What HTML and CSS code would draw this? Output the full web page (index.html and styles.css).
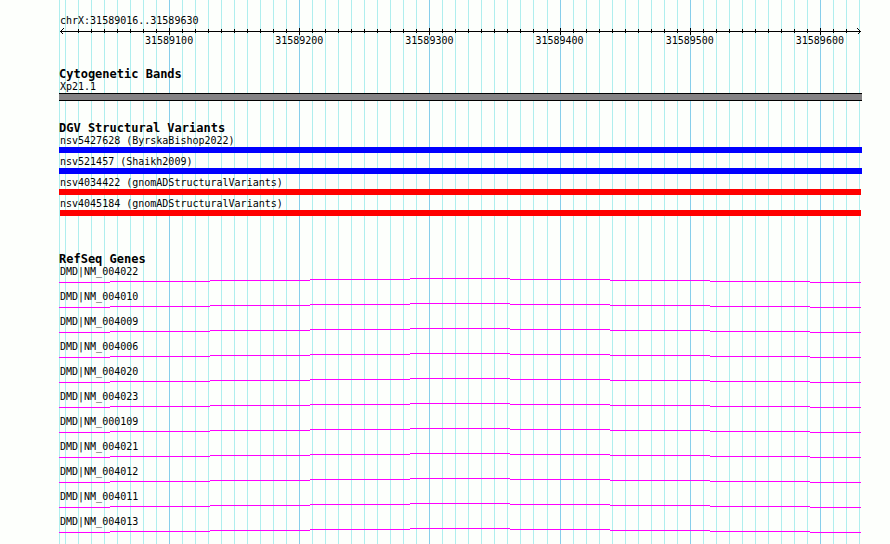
FILE: index.html
```html
<!DOCTYPE html>
<html lang="en">
<head>
<meta charset="utf-8">
<title>chrX:31589016..31589630</title>
<link rel="stylesheet" href="styles.css">
</head>
<body>
<svg width="0" height="0" class="defs" aria-hidden="true">
  <symbol id="intron" viewBox="0 0 803 5" preserveAspectRatio="none">
    <path d="M0 4.5H51M51 3.5H151M151 2.5H251M251 1.5H351M351 .5H451M451 1.5H551M551 2.5H651M651 3.5H751M751 4.5H802"/>
  </symbol>
</svg>
<main class="browser">
  <svg class="gridlines" viewBox="0 0 803 544" preserveAspectRatio="none" aria-hidden="true">
    <path class="minor" d="M.5 0V544M6.5 0V544M19.5 0V544M32.5 0V544M45.5 0V544M58.5 0V544M71.5 0V544M84.5 0V544M97.5 0V544M123.5 0V544M136.5 0V544M149.5 0V544M162.5 0V544M175.5 0V544M188.5 0V544M201.5 0V544M214.5 0V544M227.5 0V544M253.5 0V544M266.5 0V544M279.5 0V544M292.5 0V544M305.5 0V544M318.5 0V544M331.5 0V544M344.5 0V544M357.5 0V544M383.5 0V544M396.5 0V544M409.5 0V544M422.5 0V544M435.5 0V544M448.5 0V544M461.5 0V544M474.5 0V544M488.5 0V544M514.5 0V544M527.5 0V544M540.5 0V544M553.5 0V544M566.5 0V544M579.5 0V544M592.5 0V544M605.5 0V544M618.5 0V544M644.5 0V544M657.5 0V544M670.5 0V544M683.5 0V544M696.5 0V544M709.5 0V544M722.5 0V544M735.5 0V544M748.5 0V544M774.5 0V544M787.5 0V544M800.5 0V544"/>
    <path class="major" d="M110.5 0V544M240.5 0V544M370.5 0V544M501.5 0V544M631.5 0V544M761.5 0V544"/>
  </svg>

  <header class="scale">
    <h1 class="region">chrX:31589016..31589630</h1>
    <svg class="ruler" viewBox="0 0 803 8" preserveAspectRatio="none" aria-hidden="true">
      <path d="M1 4.5H802"/>
      <path d="M19.5 2V6M32.5 2V6M45.5 2V6M58.5 2V6M71.5 2V6M84.5 2V6M97.5 2V6M123.5 2V6M136.5 2V6M149.5 2V6M162.5 2V6M175.5 2V6M188.5 2V6M201.5 2V6M214.5 2V6M227.5 2V6M253.5 2V6M266.5 2V6M279.5 2V6M292.5 2V6M305.5 2V6M318.5 2V6M331.5 2V6M344.5 2V6M357.5 2V6M383.5 2V6M396.5 2V6M409.5 2V6M422.5 2V6M435.5 2V6M448.5 2V6M461.5 2V6M474.5 2V6M488.5 2V6M514.5 2V6M527.5 2V6M540.5 2V6M553.5 2V6M566.5 2V6M579.5 2V6M592.5 2V6M605.5 2V6M618.5 2V6M644.5 2V6M657.5 2V6M670.5 2V6M683.5 2V6M696.5 2V6M709.5 2V6M722.5 2V6M735.5 2V6M748.5 2V6M774.5 2V6M787.5 2V6"/>
      <path d="M110.5 1V8M240.5 1V8M370.5 1V8M501.5 1V8M631.5 1V8M761.5 1V8"/>
      <path d="M4.5 1.5L1.5 4.5L4.5 7.5M798.5 1.5L801.5 4.5L798.5 7.5"/>
    </svg>
    <div class="positions">
      <span>31589100</span><span>31589200</span><span>31589300</span><span>31589400</span><span>31589500</span><span>31589600</span>
    </div>
  </header>

  <section class="track cytobands">
    <h2>Cytogenetic Bands</h2>
    <ul>
      <li><span>Xp21.1</span><div class="bar band"></div></li>
    </ul>
  </section>

  <section class="track variants">
    <h2>DGV Structural Variants</h2>
    <ul>
      <li><span>nsv5427628 (ByrskaBishop2022)</span><div class="bar gain"></div></li>
      <li><span>nsv521457 (Shaikh2009)</span><div class="bar gain"></div></li>
      <li><span>nsv4034422 (gnomADStructuralVariants)</span><div class="bar loss"></div></li>
      <li><span>nsv4045184 (gnomADStructuralVariants)</span><div class="bar loss inside"></div></li>
    </ul>
  </section>

  <section class="track genes">
    <h2>RefSeq Genes</h2>
    <ul>
      <li><span>DMD|NM_004022</span><svg class="intron"><use href="#intron"/></svg></li>
      <li><span>DMD|NM_004010</span><svg class="intron"><use href="#intron"/></svg></li>
      <li><span>DMD|NM_004009</span><svg class="intron"><use href="#intron"/></svg></li>
      <li><span>DMD|NM_004006</span><svg class="intron"><use href="#intron"/></svg></li>
      <li><span>DMD|NM_004020</span><svg class="intron"><use href="#intron"/></svg></li>
      <li><span>DMD|NM_004023</span><svg class="intron"><use href="#intron"/></svg></li>
      <li><span>DMD|NM_000109</span><svg class="intron"><use href="#intron"/></svg></li>
      <li><span>DMD|NM_004021</span><svg class="intron"><use href="#intron"/></svg></li>
      <li><span>DMD|NM_004012</span><svg class="intron"><use href="#intron"/></svg></li>
      <li><span>DMD|NM_004011</span><svg class="intron"><use href="#intron"/></svg></li>
      <li><span>DMD|NM_004013</span><svg class="intron"><use href="#intron"/></svg></li>
    </ul>
  </section>
</main>
</body>
</html>
```
FILE: styles.css
```css
* {
  box-sizing: border-box;
}

body {
  margin: 0;
  background: #fdfffc;
  color: #000;
  font: 10px/12px "DejaVu Sans Mono", "Liberation Mono", monospace;
}

h1, h2, ul {
  margin: 0;
  padding: 0;
  font-size: inherit;
  font-weight: normal;
}

.defs {
  position: absolute;
}

.browser {
  position: relative;
  min-height: 100vh;
  margin: 0 28px 0 59px;
  padding-top: 15px;
}

.gridlines {
  position: absolute;
  z-index: -1;
  inset: 0;
  width: 100%;
  height: 100%;
  shape-rendering: crispEdges;
}

.minor {
  stroke: #afeeee;
}

.major {
  stroke: #87ceeb;
}

.region {
  padding-left: 1px;
}

.ruler {
  display: block;
  width: 100%;
  height: 8px;
  fill: none;
  stroke: #000;
  shape-rendering: crispEdges;
}

.positions {
  display: flex;
  justify-content: space-between;
  padding: 0 18px 0 86px;
}

.track h2 {
  font-size: 12px;
  font-weight: bold;
  line-height: 14px;
}

.track ul {
  display: flex;
  flex-direction: column;
  list-style: none;
}

.track li {
  display: flex;
  flex-direction: column;
}

.track span {
  padding-left: 1px;
}

.cytobands,
.variants {
  margin-top: 20px;
}

.variants ul {
  gap: 3px;
}

.genes {
  margin-top: 36px;
}

.genes ul {
  gap: 8px;
}

.bar {
  height: 6px;
}

.band {
  height: 8px;
  border: solid #000;
  border-width: 1px 0;
  background: #848284;
}

.gain {
  background: #00f;
}

.loss {
  margin-right: 1px;
  background: #f00;
}

.inside {
  margin-left: 1px;
}

.intron {
  display: block;
  width: 100%;
  height: 5px;
  fill: none;
  stroke: #f0f;
  shape-rendering: crispEdges;
}
```
